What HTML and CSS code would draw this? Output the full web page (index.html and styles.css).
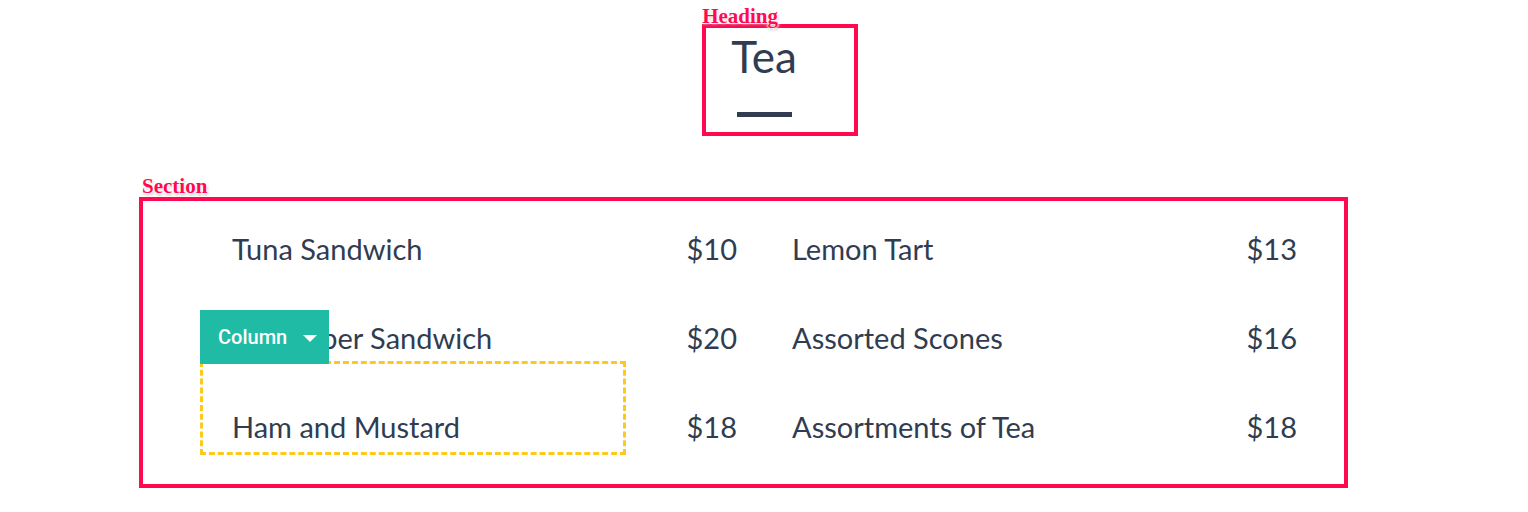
FILE: index.html
```html
<!DOCTYPE html>
<html lang="en">
<head>
<meta charset="utf-8">
<title>Tea</title>
<link rel="stylesheet" href="styles.css">
</head>
<body>
<header class="heading-wrap">
  <div class="heading">
    <h1 class="title">Tea</h1>
    <span class="rule"></span>
    <div class="frame frame-heading"><span class="tag">Heading</span></div>
  </div>
</header>
<section class="menu">
  <span class="tag tag-section">Section</span>
  <div class="grid">
    <div class="dish"><div class="name">Tuna Sandwich</div><div class="price">$10</div></div>
    <div class="dish"><div class="name">Lemon Tart</div><div class="price">$13</div></div>
    <div class="dish row"><div class="name">Cucumber Sandwich</div><div class="price">$20</div></div>
    <div class="dish row"><div class="name">Assorted Scones</div><div class="price">$16</div></div>
    <div class="dish row"><div class="name selected"><span class="badge">Column <span class="caret"></span></span>Ham and Mustard</div><div class="price">$18</div></div>
    <div class="dish row"><div class="name">Assortments of Tea</div><div class="price">$18</div></div>
  </div>
</section>
</body>
</html>
```
FILE: styles.css
```css
* { box-sizing: border-box; }
body {
  margin: 0;
  background: #fff;
  font-family: Lato, "Noto Sans", sans-serif;
  color: #313c51;
}
.heading-wrap {
  display: flex;
  justify-content: center;
  padding-top: 30px;
}
.heading {
  position: relative;
  display: flex;
  flex-direction: column;
  align-items: center;
}
.title {
  margin: 0;
  font-size: 44px;
  font-weight: 400;
  line-height: 53px;
}
.rule {
  display: block;
  width: 55px;
  height: 5px;
  margin-top: 29px;
  background: #313c51;
}
.frame {
  position: absolute;
  border: 4px solid #ff0a50;
}
.frame-heading {
  top: -6px;
  left: -29px;
  right: -61px;
  bottom: -19px;
}
.tag {
  position: absolute;
  left: 0;
  bottom: 100%;
  font-family: "Liberation Serif", serif;
  font-weight: 700;
  font-size: 21px;
  line-height: 20px;
  color: #ff0a50;
  white-space: nowrap;
  text-shadow: 0 0 1px #fff, 0 0 2px #fff, 0 0 3px #fff, 0 0 4px #fff, 1px 2px 3px rgba(0,0,0,0.3);
}
.frame-heading .tag { left: -4px; bottom: calc(100% + 2px); }
.menu {
  position: relative;
  margin: 80px 180px 0 139px;
  border: 4px solid #ff0a50;
  padding: 24px 0 29px 57px;
}
.tag-section { left: -1px; bottom: calc(100% + 5px); }
.grid {
  display: grid;
  grid-template-columns: 560px 560px;
}
.dish {
  display: flex;
  font-size: 29px;
  line-height: 48px;
}
.dish.row { padding-top: 41px; }
.name {
  position: relative;
  width: 426px;
  padding-left: 32px;
}
.price {
  flex: 1;
  text-align: right;
  padding-right: 23px;
}
.selected {
  margin-top: -42px;
  padding-top: 42px;
  padding-bottom: 4px;
  outline: 3px dashed #fdca1c;
  outline-offset: -3px;
}
.badge {
  position: absolute;
  left: 0;
  bottom: calc(100% - 3px);
  width: 129px;
  height: 54px;
  display: flex;
  align-items: center;
  padding-left: 18px;
  gap: 16px;
  background: #1fbba5;
  color: #fff;
  font-family: Roboto, "Liberation Sans", Arial, sans-serif;
  font-weight: 500;
  font-size: 20px;
  line-height: 1;
}
.caret {
  width: 0;
  height: 0;
  border-left: 7px solid transparent;
  border-right: 7px solid transparent;
  border-top: 7px solid #fff;
  margin-top: 2px;
}
```
